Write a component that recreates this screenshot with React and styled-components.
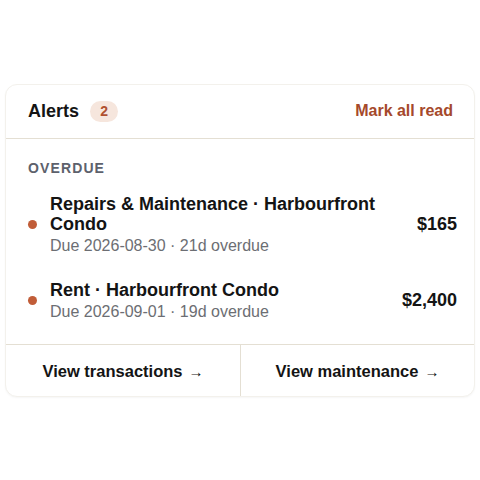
import React from "react";
import styled, { createGlobalStyle } from "styled-components";

const GlobalStyle = createGlobalStyle`
  html, body {
    margin: 0;
    padding: 0;
    background: #ffffff;
    font-family: "Liberation Sans", Arial, sans-serif;
  }
  * {
    box-sizing: border-box;
  }
`;

const Page = styled.div`
  min-height: 100vh;
  display: flex;
  align-items: center;
  justify-content: center;
`;

const Card = styled.section`
  width: 470px;
  background: #ffffff;
  border: 1px solid #f3f1ec;
  border-radius: 12px;
  box-shadow: 0 1px 2px rgba(0, 0, 0, 0.04);
  overflow: hidden;
`;

const Header = styled.header`
  height: 54px;
  display: flex;
  align-items: center;
  justify-content: space-between;
  padding: 0 21px 0 22px;
  border-bottom: 1px solid #e4dfd3;
`;

const TitleWrap = styled.div`
  display: flex;
  align-items: center;
  gap: 11px;
`;

const Title = styled.h2`
  margin: 0;
  font-size: 18px;
  font-weight: 700;
  color: #141414;
`;

const Badge = styled.span`
  display: inline-flex;
  align-items: center;
  justify-content: center;
  min-width: 28px;
  height: 21px;
  padding: 0 8px;
  border-radius: 999px;
  background: #f6e6dd;
  color: #b0502f;
  font-size: 14px;
  font-weight: 700;
`;

const LinkButton = styled.button`
  border: 0;
  background: none;
  padding: 0;
  font-family: inherit;
  font-size: 16px;
  font-weight: 700;
  color: #a5492b;
  cursor: pointer;
`;

const Body = styled.div`
  padding: 21px 17px 10px 22px;
`;

const SectionLabel = styled.div`
  font-size: 14px;
  line-height: 16px;
  font-weight: 700;
  letter-spacing: 0.08em;
  color: #5d616c;
  margin-bottom: 6px;
`;

const Item = styled.div`
  display: flex;
  align-items: center;
  gap: 13px;
  padding: 12px 0;
`;

const Dot = styled.span`
  flex: none;
  width: 9px;
  height: 9px;
  border-radius: 50%;
  background: #c15d38;
`;

const ItemText = styled.div`
  flex: 1;
  min-width: 0;
  padding-right: 24px;
`;

const ItemTitle = styled.div`
  font-size: 18px;
  line-height: 20px;
  font-weight: 700;
  color: #141414;
`;

const ItemMeta = styled.div`
  font-size: 16px;
  line-height: 20px;
  color: #6c6e73;
  margin-top: 2px;
`;

const Amount = styled.div`
  flex: none;
  font-size: 18px;
  font-weight: 700;
  color: #141414;
`;

const Footer = styled.footer`
  display: grid;
  grid-template-columns: 1fr 1fr;
  border-top: 1px solid #e4dfd3;
`;

const FooterButton = styled.button`
  height: 51px;
  padding: 2px 0 0;
  border: 0;
  background: none;
  font-family: inherit;
  font-size: 16.5px;
  font-weight: 700;
  color: #141414;
  cursor: pointer;
  & + & {
    border-left: 1px solid #e4dfd3;
  }
`;

const Arrow = styled.span`
  font-size: 15px;
  margin-left: 6px;
`;

const alerts = [
  {
    title: "Repairs & Maintenance · Harbourfront Condo",
    meta: "Due 2026-08-30 · 21d overdue",
    amount: "$165",
  },
  {
    title: "Rent · Harbourfront Condo",
    meta: "Due 2026-09-01 · 19d overdue",
    amount: "$2,400",
  },
];

export default function App() {
  return (
    <>
      <GlobalStyle />
      <Page>
        <Card>
          <Header>
            <TitleWrap>
              <Title>Alerts</Title>
              <Badge>{alerts.length}</Badge>
            </TitleWrap>
            <LinkButton>Mark all read</LinkButton>
          </Header>
          <Body>
            <SectionLabel>OVERDUE</SectionLabel>
            {alerts.map((a) => (
              <Item key={a.meta}>
                <Dot />
                <ItemText>
                  <ItemTitle>{a.title}</ItemTitle>
                  <ItemMeta>{a.meta}</ItemMeta>
                </ItemText>
                <Amount>{a.amount}</Amount>
              </Item>
            ))}
          </Body>
          <Footer>
            <FooterButton>
              View transactions<Arrow>→</Arrow>
            </FooterButton>
            <FooterButton>
              View maintenance<Arrow>→</Arrow>
            </FooterButton>
          </Footer>
        </Card>
      </Page>
    </>
  );
}
